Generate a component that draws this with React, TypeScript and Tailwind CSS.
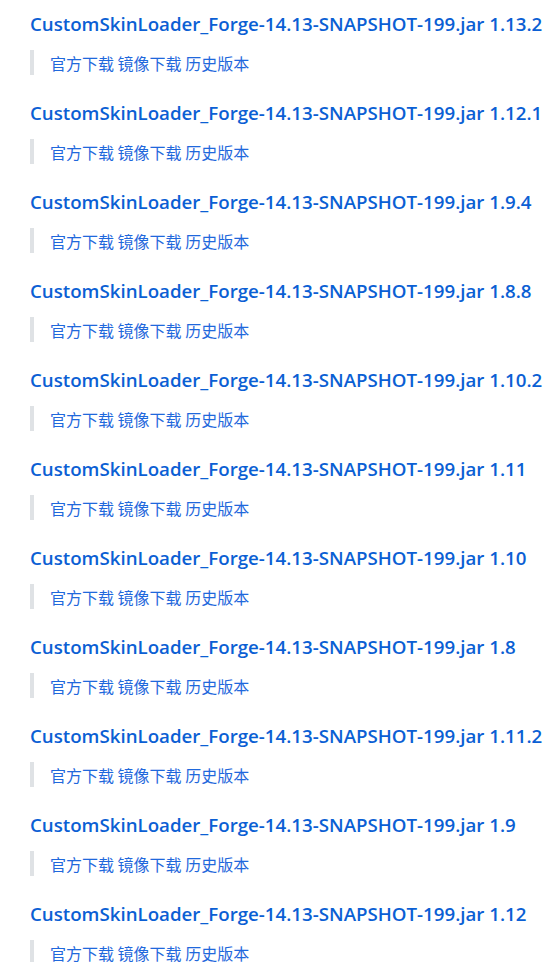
import React from "react";

const versions = ["1.13.2", "1.12.1", "1.9.4", "1.8.8", "1.10.2", "1.11", "1.10", "1.8", "1.11.2", "1.9", "1.12"];

export default function App() {
  return (
    <div className="bg-white w-[546px] h-[962px] overflow-hidden pl-[30px] pt-[11px]" style={{ fontFamily: '"Open Sans", "Noto Sans CJK SC", sans-serif' }}>
      {versions.map((v) => (
        <div key={v} className="h-[89px]">
          <div className="text-[18.7px] leading-[26px] font-semibold text-[#0b5fd4] whitespace-nowrap">
            CustomSkinLoader_Forge-14.13-SNAPSHOT-199.jar {v}
          </div>
          <div className="mt-[13px] border-l-4 border-[#dfe2e5] pl-[16px] h-[25px] flex items-center text-[16px] text-[#1f68dc]" style={{ fontFamily: '"Noto Sans CJK SC", sans-serif' }}>
            官方下载 镜像下载 历史版本
          </div>
        </div>
      ))}
    </div>
  );
}
